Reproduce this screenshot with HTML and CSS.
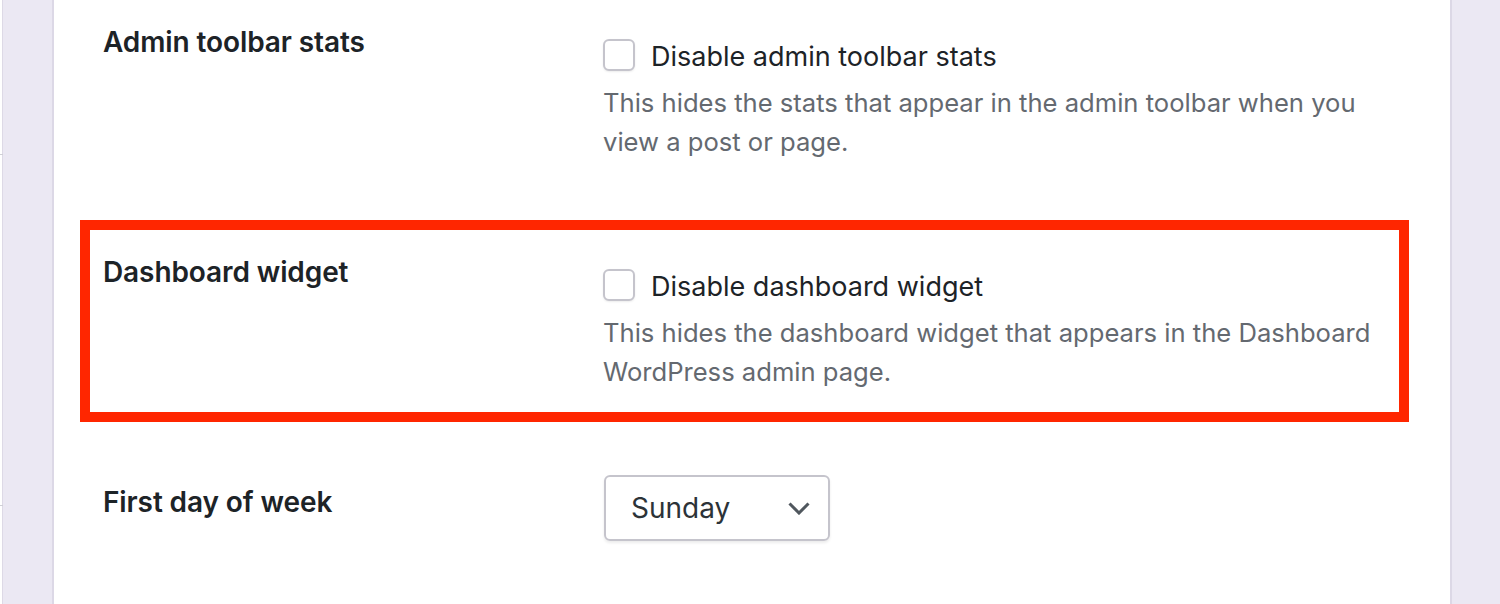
FILE: index.html
```html
<!DOCTYPE html>
<html lang="en">
<head>
    <meta charset="UTF-8" />
    <meta name="viewport" content="width=device-width,initial-scale=1.0" />
    <title>Settings</title>
    <link rel="stylesheet" href="styles.css">
</head>
<body>

    <div class="page">
        <div class="side side-left"></div>

        <div class="panel">
            <div class="row">
                <div class="row-label">Admin toolbar stats</div>
                <div class="field">
                    <label class="check">
                        <input type="checkbox">
                        <span>Disable admin toolbar stats</span>
                    </label>
                    <p class="desc">This hides the stats that appear in the admin toolbar when you view a post or page.</p>
                </div>
            </div>

            <div class="row highlight">
                <div class="row-label">Dashboard widget</div>
                <div class="field">
                    <label class="check">
                        <input type="checkbox">
                        <span>Disable dashboard widget</span>
                    </label>
                    <p class="desc">This hides the dashboard widget that appears in the Dashboard WordPress admin page.</p>
                </div>
            </div>

            <div class="row">
                <div class="row-label">First day of week</div>
                <div class="field field-select">
                    <div class="select">
                        <span>Sunday</span>
                        <svg width="22" height="13" viewBox="0 0 22 13">
                            <path d="M1.5 1.5 L11 11 L20.5 1.5" fill="none" stroke="#50575e" stroke-width="3"/>
                        </svg>
                    </div>
                </div>
            </div>
        </div>

        <div class="side side-right"></div>
    </div>

</body>
</html>
```

FILE: styles.css
```css
body {
    margin: 0;
    padding: 0;
    font-family: Inter, "Noto Sans", sans-serif;
    color: #1d2327;
    background: #fff;
}

.page {
    display: flex;
    height: 604px;
    overflow: hidden;
}

.side {
    background: #ebe8f3;
}

.side-left {
    width: 49px;
    border-left: 1px solid #ddd9e6;
    border-right: 2px solid #dcd8e6;
    margin-left: 2px;
    position: relative;
}

/* little ticks of the menu on the far left */
.side-left::before,
.side-left::after {
    content: "";
    position: absolute;
    left: -3px;
    width: 3px;
    height: 1px;
    background: #cfcfd6;
}

.side-left::before {
    top: 154px;
}

.side-left::after {
    top: 505px;
}

.side-right {
    width: 48px;
    border-left: 2px solid #dcd8e6;
}

.panel {
    flex: 1;
    background: #fff;
    padding-left: 49px;
}

.row {
    display: grid;
    grid-template-columns: 500px 1fr;
    height: 230px;
    box-sizing: border-box;
    padding-top: 15px;
}

.row.highlight {
    position: relative;
}

.row.highlight::after {
    content: "";
    position: absolute;
    left: -13px;
    top: 0;
    width: 1309px;
    height: 182px;
    outline: 10px solid #ff2600;
}

.row-label {
    padding-top: 9px;
    font-size: 28px;
    font-weight: 600;
    line-height: 36px;
    letter-spacing: -0.1px;
}

.field {
    padding-top: 24px;
    padding-right: 55px;
}

.check {
    display: flex;
    align-items: center;
    gap: 16px;
    height: 32px;
    font-size: 27px;
    color: #1d2327;
}

.check span {
    padding-top: 3px;
}

.check input {
    appearance: none;
    margin: 0;
    width: 32px;
    height: 32px;
    border: 2px solid #c5c4cc;
    border-radius: 6px;
    background: #fff;
    box-shadow: 0 1px 2px rgba(0,0,0,0.08);
    box-sizing: border-box;
}

.desc {
    margin: 12px 0 0;
    font-size: 25.6px;
    line-height: 39px;
    color: #646970;
}

.field-select {
    padding-top: 0;
}

.select {
    display: flex;
    align-items: center;
    justify-content: space-between;
    width: 226px;
    height: 66px;
    box-sizing: border-box;
    margin-left: 1px;
    padding: 0 18px 0 25px;
    border: 2px solid #c5c4cc;
    border-radius: 6px;
    box-shadow: 0 2px 3px rgba(0,0,0,0.08);
    font-size: 28px;
    color: #2c3338;
}
```
